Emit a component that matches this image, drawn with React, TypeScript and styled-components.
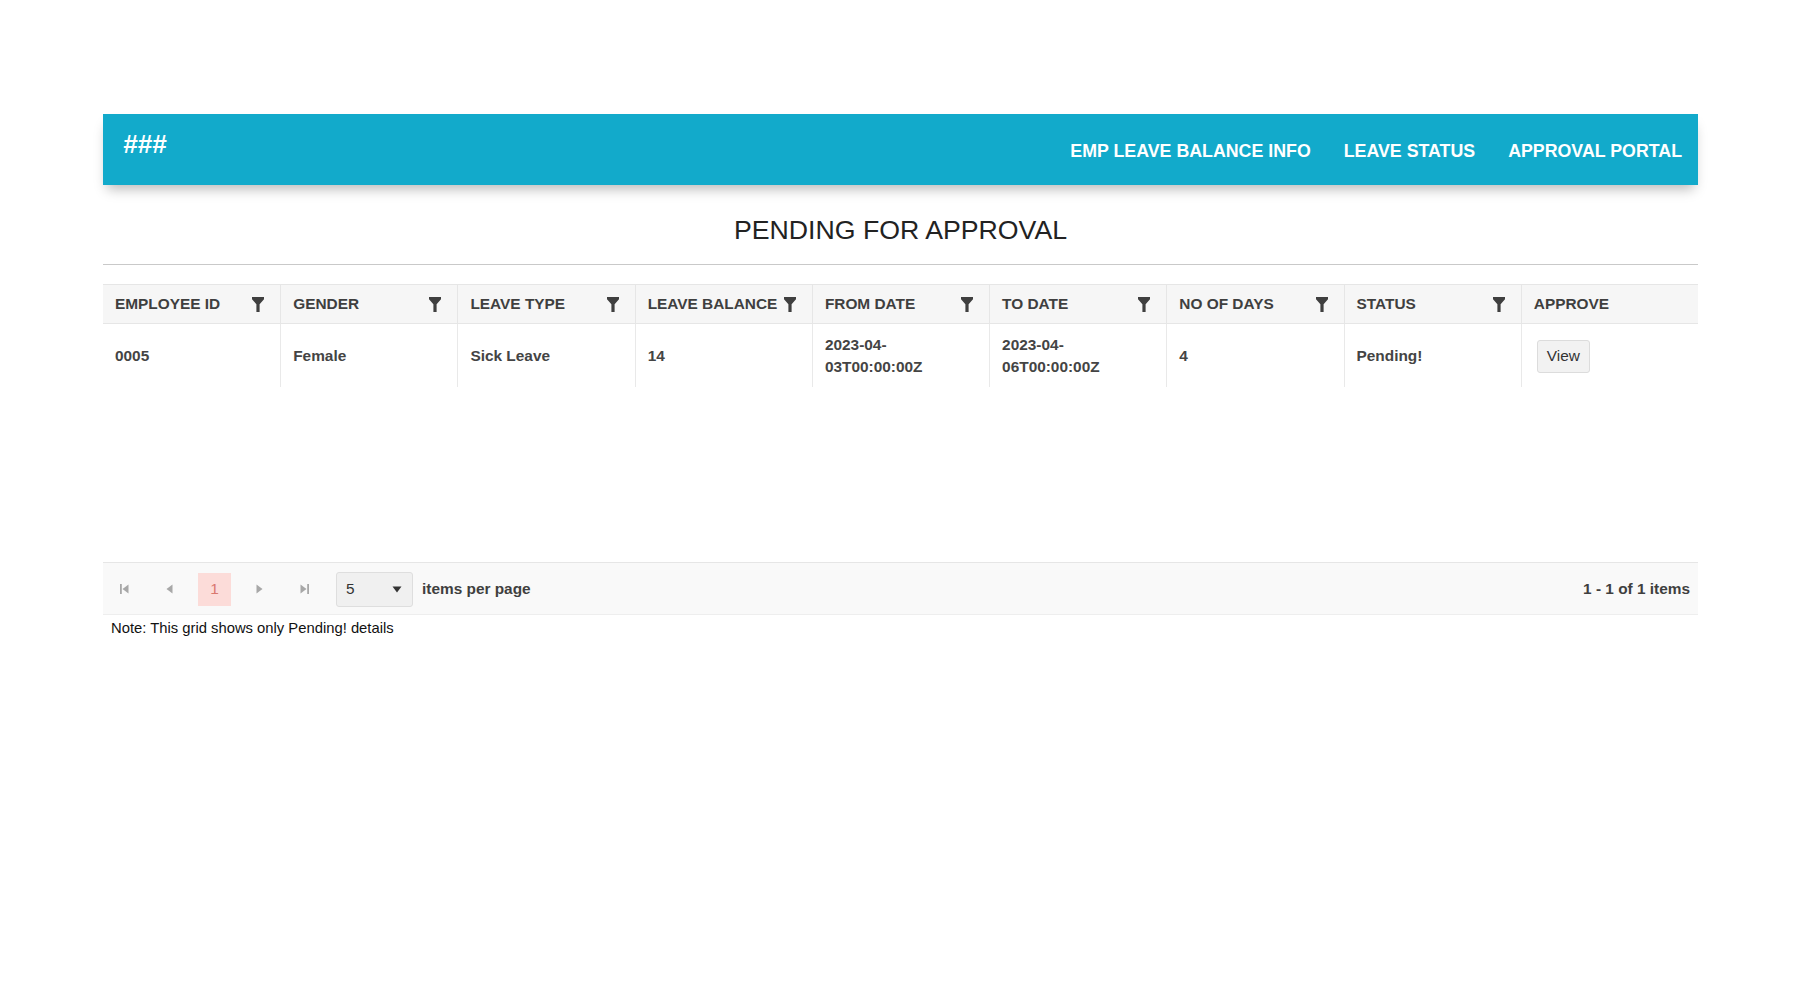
import React from 'react';
import styled, { createGlobalStyle } from 'styled-components';

const GlobalStyle = createGlobalStyle`
  body {
    margin: 0;
    background: #ffffff;
    font-family: "Liberation Sans", Arial, sans-serif;
  }
`

const Page = styled.div`
  padding: 114px 102px 0 103px;
`

const Header = styled.header`
  height: 71px;
  background: #12aacb;
  display: flex;
  align-items: center;
  justify-content: space-between;
  box-shadow: 0 8px 12px -4px rgba(0, 0, 0, 0.28);
  position: relative;
  z-index: 1;
`

const Logo = styled.div`
  align-self: flex-start;
  margin: 15px 0 0 20px;
  color: #ffffff;
  font-size: 26px;
  font-weight: 700;
  font-style: italic;
  line-height: 30px;
`

const Nav = styled.nav`
  display: flex;
  gap: 33px;
  padding: 3px 16px 0 0;
`

const NavLink = styled.a`
  color: #ffffff;
  font-size: 17.8px;
  font-weight: 700;
  text-decoration: none;
  text-transform: uppercase;
  cursor: pointer;
`

const Title = styled.h2`
  margin: 30px 0 0;
  padding-bottom: 19px;
  border-bottom: 1px solid #c9c9c9;
  text-align: center;
  font-size: 26.7px;
  font-weight: 400;
  line-height: 30px;
  color: #222222;
`

const Grid = styled.div`
  margin-top: 19px;
`

const Row = styled.div<{ head?: boolean }>`
  display: grid;
  grid-template-columns: repeat(9, 1fr);
  height: ${props => props.head ? '40px' : '63px'};
  background: ${props => props.head ? '#f6f6f6' : '#ffffff'};
  border-top: ${props => props.head ? '1px solid #e6e6e6' : 'none'};
  border-bottom: ${props => props.head ? '1px solid #e6e6e6' : 'none'};
  box-sizing: border-box;
`

const HeadCell = styled.div`
  display: flex;
  align-items: center;
  justify-content: space-between;
  gap: 4px;
  padding: 0 16px 0 12px;
  border-left: 1px solid #e6e6e6;
  font-size: 15.4px;
  font-weight: 700;
  color: #3f3f3f;
  white-space: nowrap;
  overflow: hidden;

  &:first-child {
    border-left: none;
  }
`

const Cell = styled.div`
  display: flex;
  align-items: center;
  padding: 1px 12px 0;
  border-left: 1px solid #e9e9e9;
  font-size: 15.4px;
  font-weight: 700;
  line-height: 22px;
  color: #444444;
  min-width: 0;

  &:first-child {
    border-left: none;
  }
`

const ViewButton = styled.button`
  margin-left: 3px;
  width: 53px;
  height: 33px;
  background: #f2f2f2;
  border: 1px solid #dcdcdc;
  border-radius: 3px;
  font-family: "Liberation Sans", Arial, sans-serif;
  font-size: 15.4px;
  color: #333333;
  cursor: pointer;
`

const Body = styled.div`
  height: 238px;
`

const Pager = styled.div`
  height: 53px;
  display: flex;
  align-items: center;
  padding: 1px 8px 0 5px;
  background: #f9f9f9;
  border-top: 1px solid #e6e6e6;
  border-bottom: 1px solid #eeeeee;
  box-sizing: border-box;
`

const PageButton = styled.div<{ active?: boolean }>`
  width: 33px;
  height: 33px;
  margin-right: 12px;
  display: flex;
  align-items: center;
  justify-content: center;
  background: ${props => props.active ? '#fcdcd9' : 'transparent'};
  color: ${props => props.active ? '#d9786f' : '#a8a8a8'};
  font-size: 15.4px;
`

const SizeSelect = styled.div`
  margin-left: 3px;
  width: 77px;
  height: 35px;
  display: flex;
  align-items: center;
  justify-content: space-between;
  padding: 0 10px 0 9px;
  box-sizing: border-box;
  background: #f0f0f0;
  border: 1px solid #dedede;
  border-radius: 3px;
  font-size: 15.4px;
  color: #333333;
`

const PagerLabel = styled.span<{ right?: boolean }>`
  margin-left: ${props => props.right ? 'auto' : '9px'};
  font-size: 15.4px;
  font-weight: 700;
  color: #3f3f3f;
`

const Note = styled.div`
  margin: 4px 0 0 8px;
  font-size: 14.8px;
  line-height: 18px;
  color: #111111;
`

const FilterIcon = () => (
  <svg width="12" height="15" viewBox="0 0 12 15" style={{ flexShrink: 0 }}>
    <path d="M0 0H12V2.2L7.6 7.2V15H4.4V7.2L0 2.2Z" fill="#3f3f3f" />
  </svg>
)

const ArrowIcon = ({ dir, bar }: { dir: 'left' | 'right'; bar?: boolean }) => (
  <svg width="11" height="12" viewBox="0 0 11 12">
    {dir === 'left' ? (
      <>
        {bar && <rect x="1" y="1" width="1.8" height="10" fill="#a8a8a8" />}
        <path d={bar ? 'M9.5 1.5V10.5L3.5 6Z' : 'M8.5 1.5V10.5L2.5 6Z'} fill="#a8a8a8" />
      </>
    ) : (
      <>
        <path d={bar ? 'M1.5 1.5V10.5L7.5 6Z' : 'M2.5 1.5V10.5L8.5 6Z'} fill="#a8a8a8" />
        {bar && <rect x="8.2" y="1" width="1.8" height="10" fill="#a8a8a8" />}
      </>
    )}
  </svg>
)

const columns = [
  { title: 'EMPLOYEE ID', filter: true },
  { title: 'GENDER', filter: true },
  { title: 'LEAVE TYPE', filter: true },
  { title: 'LEAVE BALANCE', filter: true },
  { title: 'FROM DATE', filter: true },
  { title: 'TO DATE', filter: true },
  { title: 'NO OF DAYS', filter: true },
  { title: 'STATUS', filter: true },
  { title: 'APPROVE', filter: false },
]

const rows = [
  {
    id: '0005',
    gender: 'Female',
    type: 'Sick Leave',
    balance: 14,
    from: '2023-04-03T00:00:00Z',
    to: '2023-04-06T00:00:00Z',
    days: 4,
    status: 'Pending!',
  },
]

// let the date break after its hyphens, like the original grid
const breakable = (value: string) => {
  const parts = value.split('-');
  return parts.map((p, i) => (
    <React.Fragment key={i}>
      {p}
      {i < parts.length - 1 && <>-<wbr /></>}
    </React.Fragment>
  ));
}

const App: React.FC = () => {
  return (
    <Page>
      <GlobalStyle />
      <Header>
        <Logo>###</Logo>
        <Nav>
          <NavLink>Emp Leave Balance Info</NavLink>
          <NavLink>Leave Status</NavLink>
          <NavLink>Approval Portal</NavLink>
        </Nav>
      </Header>

      <Title>PENDING FOR APPROVAL</Title>

      <Grid>
        <Row head>
          {columns.map(col => (
            <HeadCell key={col.title}>
              <span>{col.title}</span>
              {col.filter && <FilterIcon />}
            </HeadCell>
          ))}
        </Row>
        <Body>
          {rows.map(r => (
            <Row key={r.id}>
              <Cell>{r.id}</Cell>
              <Cell>{r.gender}</Cell>
              <Cell>{r.type}</Cell>
              <Cell>{r.balance}</Cell>
              <Cell>
                <span>{breakable(r.from)}</span>
              </Cell>
              <Cell>
                <span>{breakable(r.to)}</span>
              </Cell>
              <Cell>{r.days}</Cell>
              <Cell>{r.status}</Cell>
              <Cell>
                <ViewButton>View</ViewButton>
              </Cell>
            </Row>
          ))}
        </Body>
        <Pager>
          <PageButton><ArrowIcon dir="left" bar /></PageButton>
          <PageButton><ArrowIcon dir="left" /></PageButton>
          <PageButton active>1</PageButton>
          <PageButton><ArrowIcon dir="right" /></PageButton>
          <PageButton><ArrowIcon dir="right" bar /></PageButton>
          <SizeSelect>
            <span>5</span>
            <svg width="10" height="7" viewBox="0 0 10 7">
              <path d="M0.5 0.5H9.5L5 6.5Z" fill="#333333" />
            </svg>
          </SizeSelect>
          <PagerLabel>items per page</PagerLabel>
          <PagerLabel right>1 - 1 of 1 items</PagerLabel>
        </Pager>
      </Grid>

      <Note>Note: This grid shows only Pending! details</Note>
    </Page>
  )
}

export default App;
